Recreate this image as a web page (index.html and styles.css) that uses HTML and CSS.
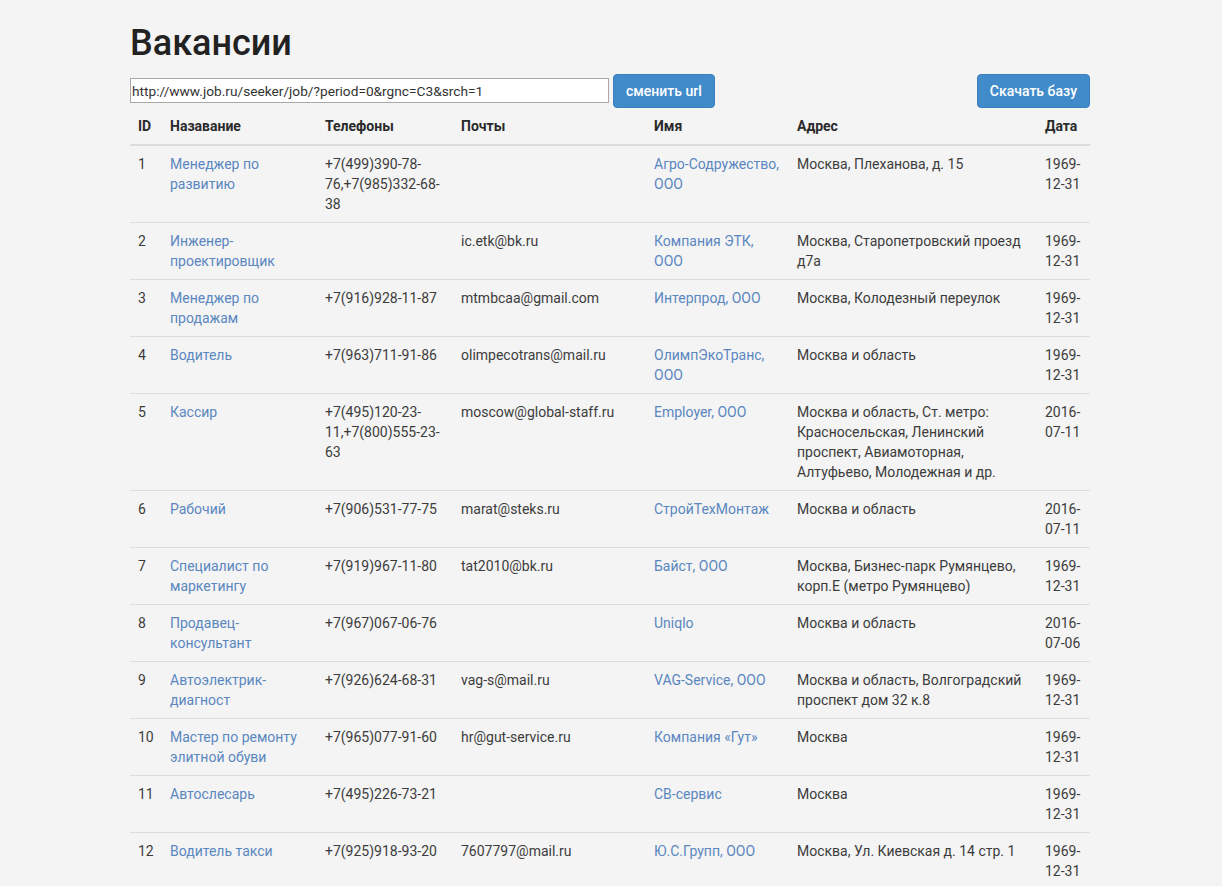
FILE: index.html
```html
<!DOCTYPE html>
<html lang="ru">
<head>
<meta charset="utf-8">
<title>Вакансии</title>
<link rel="stylesheet" href="styles.css">
</head>
<body>
<div class="container">
  <h1 class="title">Вакансии</h1>
  <div class="toolbar">
    <div class="url-form">
      <input class="url-input" type="text" value="http://www.job.ru/seeker/job/?period=0&amp;rgnc=C3&amp;srch=1">
      <button class="btn">сменить url</button>
    </div>
    <button class="btn btn-right">Скачать базу</button>
  </div>
  <table class="jobs">
    <colgroup>
      <col class="c-id"><col class="c-title"><col class="c-phone"><col class="c-mail"><col class="c-name"><col class="c-addr"><col class="c-date">
    </colgroup>
    <thead>
      <tr><th>ID</th><th>Назавание</th><th>Телефоны</th><th>Почты</th><th>Имя</th><th>Адрес</th><th>Дата</th></tr>
    </thead>
    <tbody>
      <tr><td>1</td><td><a href="#">Менеджер по развитию</a></td><td>+7(499)390-78-76,+7(985)332-68-38</td><td></td><td><a href="#">Агро-Содружество, ООО</a></td><td>Москва, Плеханова, д. 15</td><td>1969-12-31</td></tr>
      <tr><td>2</td><td><a href="#">Инженер-проектировщик</a></td><td></td><td>ic.etk@bk.ru</td><td><a href="#">Компания ЭТК, ООО</a></td><td>Москва, Старопетровский проезд д7а</td><td>1969-12-31</td></tr>
      <tr><td>3</td><td><a href="#">Менеджер по продажам</a></td><td>+7(916)928-11-87</td><td>mtmbcaa@gmail.com</td><td><a href="#">Интерпрод, ООО</a></td><td>Москва, Колодезный переулок</td><td>1969-12-31</td></tr>
      <tr><td>4</td><td><a href="#">Водитель</a></td><td>+7(963)711-91-86</td><td>olimpecotrans@mail.ru</td><td><a href="#">ОлимпЭкоТранс, ООО</a></td><td>Москва и область</td><td>1969-12-31</td></tr>
      <tr><td>5</td><td><a href="#">Кассир</a></td><td>+7(495)120-23-11,+7(800)555-23-63</td><td>moscow@global-staff.ru</td><td><a href="#">Employer, ООО</a></td><td>Москва и область, Ст. метро: Красносельская, Ленинский проспект, Авиамоторная, Алтуфьево, Молодежная и др.</td><td>2016-07-11</td></tr>
      <tr><td>6</td><td><a href="#">Рабочий</a></td><td>+7(906)531-77-75</td><td>marat@steks.ru</td><td><a href="#">СтройТехМонтаж</a></td><td>Москва и область</td><td>2016-07-11</td></tr>
      <tr><td>7</td><td><a href="#">Специалист по маркетингу</a></td><td>+7(919)967-11-80</td><td>tat2010@bk.ru</td><td><a href="#">Байст, ООО</a></td><td>Москва, Бизнес-парк Румянцево, корп.Е (метро Румянцево)</td><td>1969-12-31</td></tr>
      <tr><td>8</td><td><a href="#">Продавец-консультант</a></td><td>+7(967)067-06-76</td><td></td><td><a href="#">Uniqlo</a></td><td>Москва и область</td><td>2016-07-06</td></tr>
      <tr><td>9</td><td><a href="#">Автоэлектрик-диагност</a></td><td>+7(926)624-68-31</td><td>vag-s@mail.ru</td><td><a href="#">VAG-Service, ООО</a></td><td>Москва и область, Волгоградский проспект дом 32 к.8</td><td>1969-12-31</td></tr>
      <tr><td>10</td><td><a href="#">Мастер по ремонту элитной обуви</a></td><td>+7(965)077-91-60</td><td>hr@gut-service.ru</td><td><a href="#">Компания «Гут»</a></td><td>Москва</td><td>1969-12-31</td></tr>
      <tr><td>11</td><td><a href="#">Автослесарь</a></td><td>+7(495)226-73-21</td><td></td><td><a href="#">СВ-сервис</a></td><td>Москва</td><td>1969-12-31</td></tr>
      <tr><td>12</td><td><a href="#">Водитель такси</a></td><td>+7(925)918-93-20</td><td>7607797@mail.ru</td><td><a href="#">Ю.С.Групп, ООО</a></td><td>Москва, Ул. Киевская д. 14 стр. 1</td><td>1969-12-31</td></tr>
    </tbody>
  </table>
</div>
</body>
</html>
```
FILE: styles.css
```css
* { box-sizing: border-box; }
html, body { margin: 0; padding: 0; }
body {
  background: #f4f4f4;
  color: #3c3c3c;
  font-family: Roboto, "Noto Sans", "Liberation Sans", sans-serif;
  font-size: 14px;
  line-height: 20px;
}
.container {
  width: 962px;
  padding-right: 2px;
  margin: 0 auto;
}
.title {
  font-size: 36px;
  font-weight: 500;
  line-height: 39.6px;
  color: #222;
  margin: 24px 0 10px;
}
.toolbar {
  display: flex;
  align-items: center;
  justify-content: space-between;
  height: 34px;
}
.url-form {
  display: flex;
  align-items: center;
  gap: 4px;
}
.url-input {
  width: 479px;
  height: 25px;
  border: 1px solid #a9a9a9;
  background: #fff;
  padding: 1px 1px;
  font-family: Roboto, "Liberation Sans", sans-serif;
  font-size: 13.7px;
  color: #333;
  margin: 0;
}
.btn {
  height: 34px;
  padding: 6px 12px;
  border: 1px solid #3b7fbd;
  border-radius: 4px;
  background: #428bca;
  color: #fff;
  font-family: Roboto, "Liberation Sans", sans-serif;
  font-size: 14px;
  font-weight: 500;
  line-height: 20px;
  margin: 0;
}
.jobs {
  width: 960px;
  border-collapse: collapse;
  table-layout: fixed;
}
.c-id { width: 32px; }
.c-title { width: 155px; }
.c-phone { width: 136px; }
.c-mail { width: 193px; }
.c-name { width: 143px; }
.c-addr { width: 248px; }
.c-date { width: 53px; }
.jobs th {
  text-align: left;
  font-weight: 700;
  color: #2a2a2a;
  padding: 8px;
  border-bottom: 2px solid #ddd;
  vertical-align: bottom;
}
.jobs td {
  padding: 8px;
  border-top: 1px solid #ddd;
  vertical-align: top;
  word-wrap: break-word;
}
.jobs tbody tr:first-child td { border-top: 0; }
.jobs a {
  color: #5a87bf;
  text-decoration: none;
}
```
